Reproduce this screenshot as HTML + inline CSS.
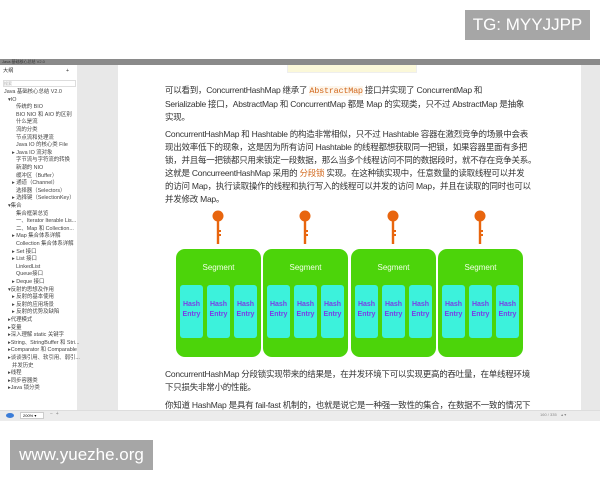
<!DOCTYPE html>
<html><head><meta charset="utf-8"><style>
*{margin:0;padding:0;box-sizing:border-box}
body{width:600px;height:480px;background:#fff;position:relative;overflow:hidden;font-family:"Liberation Sans","Noto Sans CJK SC",sans-serif;}
.abs{position:absolute}
.tg{left:465px;top:10px;width:125px;height:30px;background:#a6a6a6;color:#fff;font-size:17px;line-height:30px;text-align:center}
.yz{left:10px;top:440px;width:143px;height:30px;background:#a6a6a6;color:#fff;font-size:17px;line-height:30px;text-align:center}
.top{left:0;top:59px;width:600px;height:6px;background:#8a8a8a}
.top span{position:absolute;left:2px;top:0;font-size:4px;color:#333;line-height:6px}
.side{left:0;top:65px;width:77px;height:345px;background:#fff;font-size:5.2px;color:#333}
.side div{position:absolute;white-space:nowrap;line-height:7px}
.gcol{left:77px;top:65px;width:41px;height:345px;background:#e8e8e8}
.rcol{left:581px;top:65px;width:19px;height:345px;background:#e8e8e8}
.bot{left:0;top:410px;width:600px;height:11px;background:#ececec;border-top:1px solid #ddd}
.code{left:287px;top:65px;width:130px;height:8px;background:#fbf8d9;border:1px solid #eee;border-top:none}
.txt{left:165px;width:410px;font-size:8.5px;color:#333;line-height:13px;white-space:nowrap;letter-spacing:-0.25px}
.or{color:#d2691e}
.seg{position:absolute;top:249px;width:85px;height:108px;background:#4cd40a;border-radius:9px}
.seg .t{position:absolute;top:14px;width:100%;text-align:center;color:#f2ffe8;font-size:8px}
.he{position:absolute;top:36px;width:23px;height:53px;background:#3cf2dc;border-radius:3px;color:#7a3ee6;font-size:7px;font-weight:bold;text-align:center;line-height:10px;padding-top:15px}
.key{position:absolute;top:210px;width:12px;height:34px}
</style></head><body>
<div class="abs tg">TG: MYYJJPP</div>
<div class="abs yz">www.yuezhe.org</div>
<div class="abs top"><span>Java 基础核心总结 V2.0</span></div>
<div class="abs gcol"></div>
<div class="abs rcol"></div>
<div class="abs side">
<div style="left:3px;top:3px">大纲</div><div style="left:66px;top:3px">+</div>
<div style="left:3px;top:15px;width:73px;height:7px;border:1px solid #ddd;color:#aaa;font-size:4px;line-height:5px">搜索</div>
</div>
<div class="abs" id="list" style="left:0;top:0"></div>
<div class="abs code"></div>
<div class="abs txt" style="top:84px">可以看到，ConcurrentHashMap 继承了 <span class="or" style="font-family:'Liberation Mono',monospace;background:#fdf6ec">AbstractMap</span> 接口并实现了 ConcurrentMap 和<br>Serializable 接口，AbstractMap 和 ConcurrentMap 都是 Map 的实现类，只不过 AbstractMap 是抽象<br>实现。</div>
<div class="abs txt" style="top:128px">ConcurrentHashMap 和 Hashtable 的构造非常相似，只不过 Hashtable 容器在激烈竞争的场景中会表<br>现出效率低下的现象，这是因为所有访问 Hashtable 的线程都想获取同一把锁，如果容器里面有多把<br>锁，并且每一把锁都只用来锁定一段数据，那么当多个线程访问不同的数据段时，就不存在竞争关系。<br>这就是 ConcurreentHashMap 采用的 <span class="or">分段锁</span> 实现。在这种锁实现中，任意数量的读取线程可以并发<br>的访问 Map，执行读取操作的线程和执行写入的线程可以并发的访问 Map，并且在读取的同时也可以<br>并发修改 Map。</div>
<div class="abs txt" style="top:368px">ConcurrentHashMap 分段锁实现带来的结果是，在并发环境下可以实现更高的吞吐量，在单线程环境<br>下只损失非常小的性能。</div>
<div class="abs txt" style="top:399px;height:11px;overflow:hidden">你知道 HashMap 是具有 fail-fast 机制的，也就是说它是一种强一致性的集合，在数据不一致的情况下</div>
<div id="segs"></div>
<div class="abs bot">
<div class="abs" style="left:6px;top:2px;width:8px;height:5px;border-radius:50%;background:#3b7dd8"></div>
<div class="abs" style="left:20px;top:1px;width:24px;height:7px;border:1px solid #ccc;background:#fff;font-size:4px;line-height:5px;padding-left:2px">200% ▾</div>
<div class="abs" style="left:50px;top:0;font-size:5px;color:#888">−&nbsp;&nbsp;+</div>
<div class="abs" style="left:540px;top:1px;font-size:4px;color:#888">160 / 335&nbsp;&nbsp;&nbsp;&nbsp;▴ ▾</div>
</div>
<script>
var items=[[4,"Java 基础核心总结 V2.0"],[8,"▾IO"],[16,"传统的 BIO"],[16,"BIO NIO 和 AIO 的区别"],[16,"什么是流"],[16,"流的分类"],[16,"节点流和处理流"],[16,"Java IO 的核心类 File"],[12,"▸ Java IO 流对象"],[16,"字节流与字符流的转换"],[16,"新潮的 NIO"],[16,"缓冲区（Buffer）"],[12,"▸ 通道（Channel）"],[16,"选择器（Selectors）"],[12,"▸ 选择键（SelectionKey）"],[8,"▾集合"],[16,"集合框架总览"],[16,"一、Iterator Iterable Lis..."],[16,"二、Map 和 Collection..."],[12,"▸ Map 集合体系详解"],[16,"Collection 集合体系详解"],[12,"▸ Set 接口"],[12,"▸ List 接口"],[16,"LinkedList"],[16,"Queue接口"],[12,"▸ Deque 接口"],[8,"▾反射的思想及作用"],[12,"▸ 反射的基本使用"],[12,"▸ 反射的应用场景"],[12,"▸ 反射的优势及缺陷"],[8,"▸代理模式"],[8,"▸变量"],[8,"▸深入理解 static 关键字"],[8,"▸String、StringBuffer 和 Stri..."],[8,"▸Comparator 和 Comparable"],[8,"▸谈谈强引用、软引用、弱引..."],[12,"并发历史"],[8,"▸线程"],[8,"▸同步容器类"],[8,"▸Java 锁分类"]];
var h="";items.forEach(function(it,i){h+='<div style="position:absolute;left:'+it[0]+'px;top:'+(89+i*7.6)+'px;font-size:5.4px;color:#444;white-space:nowrap;line-height:7px">'+it[1]+'</div>';});
document.getElementById("list").innerHTML=h;
var s="";[176,263,351,438].forEach(function(x){
s+='<svg class="key" style="left:'+(x+36)+'px" viewBox="0 0 12 34"><circle cx="6" cy="6" r="5.5" fill="#e8650e"/><rect x="4.8" y="9" width="2.4" height="25" fill="#e8650e"/><rect x="7" y="20" width="2" height="2" fill="#e8650e"/><rect x="7" y="24" width="2" height="2" fill="#e8650e"/></svg>';
s+='<div class="seg" style="left:'+x+'px"><div class="t">Segment</div>';
[4,31,58].forEach(function(o){s+='<div class="he" style="left:'+o+'px">Hash<br>Entry</div>';});
s+='</div>';});
document.getElementById("segs").innerHTML=s;
</script>
</body></html>
